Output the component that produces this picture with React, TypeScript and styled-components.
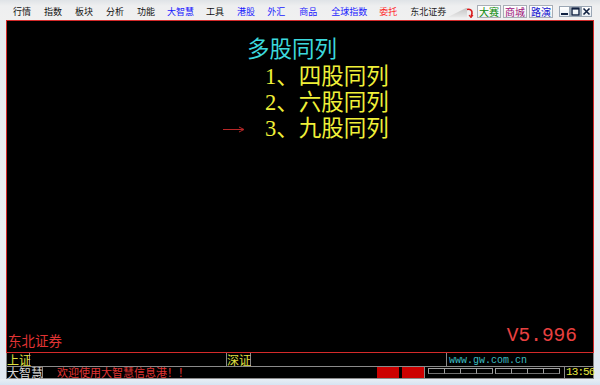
import React from "react";
import styled, { createGlobalStyle } from "styled-components";

const GlobalStyle = createGlobalStyle`
  html, body { margin: 0; padding: 0; background: #ffffff; }
  * { box-sizing: border-box; }
`;

const CJK = `"Noto Sans CJK SC", "Noto Sans", sans-serif`;

const Window = styled.div`
  width: 600px;
  height: 385px;
  display: flex;
  flex-direction: column;
  padding: 0 6px;
  background: linear-gradient(180deg, #e6eaee 0%, #eceff2 60%, #dfe8f2 100%);
  overflow: hidden;
`;

const MenuBar = styled.div`
  height: 20px;
  display: flex;
  align-items: center;
  padding: 3px 8px 0 13px;
  margin: 0 -6px;
  background: linear-gradient(180deg, #dfe3e7 0px, #eeeff0 6px, #f0f0f0 100%);
`;

const MenuItem = styled.span<{ $c?: string; $w?: number }>`
  font-family: ${CJK};
  font-size: 9px;
  line-height: 12px;
  color: ${(p) => p.$c || "#111"};
  margin-right: ${(p) => (p.$w !== undefined ? p.$w : 13)}px;
  white-space: nowrap;
`;

const Spacer = styled.div`
  flex: 1;
`;

const Slope = styled.div`
  width: 20px;
  height: 10px;
  margin-top: 2px;
  background: linear-gradient(180deg, #c4c4c4, #ececec);
  clip-path: polygon(0 100%, 100% 0, 100% 100%);
`;

const HookIcon = styled.svg`
  width: 9px;
  height: 11px;
  margin: 2px 3px 0 -2px;
`;

const ToolButton = styled.div<{ $c: string }>`
  height: 13px;
  padding: 0 1px;
  margin-right: 2px;
  display: flex;
  align-items: center;
  border: 1px solid #a8aeb6;
  background: linear-gradient(180deg, #ffffff, #eef0f2);
  font-family: ${CJK};
  font-size: 10px;
  color: ${(p) => p.$c};
  line-height: 11px;
`;

const Controls = styled.div`
  display: flex;
  margin-left: 4px;
`;

const CtrlBtn = styled.div`
  width: 11px;
  height: 11px;
  border: 1px solid #9aa6b4;
  background: linear-gradient(180deg, #ffffff, #e8edf2);
  display: flex;
  align-items: center;
  justify-content: center;
`;

const Main = styled.div`
  height: 333px;
  background: #000;
  border: 1px solid #d42a2a;
  display: flex;
  flex-direction: column;
`;

const Title = styled.div`
  padding: 13px 0 0 240px;
  font-family: ${CJK};
  font-size: 22.5px;
  line-height: 26px;
  color: #3cd8dc;
  margin-bottom: 4px;
`;

const OptionRow = styled.div`
  display: flex;
  align-items: center;
  height: 26px;
  padding-left: 216px;
`;

const ArrowSlot = styled.div`
  width: 22px;
  height: 8px;
  margin-right: 20px;
  display: flex;
  align-items: center;
`;

const OptionText = styled.span`
  font-family: "Liberation Serif", ${CJK};
  font-size: 22.5px;
  line-height: 26px;
  color: #f0f038;
  white-space: nowrap;
`;

const Num = styled.span`
  font-family: "Liberation Serif", serif;
`;

const Footer = styled.div`
  margin-top: auto;
  display: flex;
  justify-content: space-between;
  align-items: flex-end;
  padding: 0 16px 4px 1px;
`;

const Brand = styled.span`
  font-family: ${CJK};
  font-size: 13.5px;
  line-height: 16px;
  color: #e03434;
`;

const Version = styled.span`
  font-family: "Liberation Mono", monospace;
  font-size: 19.5px;
  line-height: 20px;
  color: #e84040;
  margin-bottom: 2px;
`;

const StatusRow = styled.div<{ $h: number }>`
  height: ${(p) => p.$h}px;
  display: flex;
  background: #000;
  border-bottom: 1px solid #8a8a8a;
  border-left: 1px solid #8a8a8a;
  border-right: 1px solid #8a8a8a;
`;

const Cell = styled.div<{ $w?: number; $c?: string }>`
  ${(p) => (p.$w !== undefined ? `width: ${p.$w}px; flex: none;` : "flex: 1;")}
  height: 100%;
  border-right: 1px solid #8a8a8a;
  font-family: ${CJK};
  font-size: 12px;
  line-height: 12px;
  color: ${(p) => p.$c || "#e0e040"};
  display: flex;
  align-items: center;
  white-space: nowrap;
  &:last-child { border-right: none; }
`;

const UrlText = styled.span`
  font-family: "Liberation Mono", monospace;
  font-size: 10px;
  line-height: 10px;
  color: #3cbcc0;
  padding-left: 2px;
  padding-top: 2px;
`;

const Message = styled.div`
  flex: 1;
  padding-left: 14px;
  font-family: ${CJK};
  font-size: 11px;
  line-height: 11px;
  color: #e03434;
  display: flex;
  align-items: center;
  white-space: nowrap;
`;

const RedBlock = styled.div<{ $ml?: number }>`
  width: 22px;
  flex: none;
  height: 100%;
  background: #cc0000;
  margin-left: ${(p) => p.$ml || 0}px;
`;

const TabArea = styled.div`
  width: 141px;
  flex: none;
  height: 100%;
  display: flex;
  align-items: flex-start;
  padding: 1px 0 0 3px;
  border-left: 1px solid #8a8a8a;
  border-right: 1px solid #8a8a8a;
`;

const TabGroup = styled.div`
  display: flex;
  margin-right: 3px;
`;

const Tab = styled.div`
  width: 17px;
  height: 6px;
  border: 1px solid #a0a0a0;
  border-bottom-color: #707070;
  margin-right: -1px;
`;

const Clock = styled.div`
  width: 28px;
  flex: none;
  font-family: "Liberation Mono", monospace;
  font-size: 11px;
  letter-spacing: -0.9px;
  color: #e8e840;
  display: flex;
  align-items: center;
  padding-left: 1px;
  line-height: 11px;
`;

const BottomFrame = styled.div`
  flex: 1;
  margin: 0 -6px;
  background: linear-gradient(180deg, #e8eef4 0%, #d6e4f2 100%);
`;

const menu: { t: string; c?: string; w?: number }[] = [
  { t: "行情" },
  { t: "指数" },
  { t: "板块" },
  { t: "分析" },
  { t: "功能", w: 12 },
  { t: "大智慧", c: "#1a1aff", w: 12 },
  { t: "工具" },
  { t: "港股", c: "#1a1aff", w: 12 },
  { t: "外汇", c: "#1a1aff", w: 14 },
  { t: "商品", c: "#1a1aff", w: 14 },
  { t: "全球指数", c: "#1a1aff", w: 12 },
  { t: "委托", c: "#ff2a2a", w: 13 },
  { t: "东北证券", c: "#222", w: 0 },
];

const options = [
  { n: "1", t: "四股同列" },
  { n: "2", t: "六股同列" },
  { n: "3", t: "九股同列", arrow: true },
];

export default function App() {
  return (
    <>
      <GlobalStyle />
      <Window>
        <MenuBar>
          {menu.map((m) => (
            <MenuItem key={m.t} $c={m.c} $w={m.w}>
              {m.t}
            </MenuItem>
          ))}
          <Spacer />
          <Slope />
          <HookIcon viewBox="0 0 9 11">
            <path d="M1.5 2.5 C5 1.5 7.5 3 7 6.5 L6 9.5" stroke="#d81818" strokeWidth="1.6" fill="none" />
            <path d="M4 8 L6 10.5 L8 8" stroke="#d81818" strokeWidth="1.2" fill="none" />
          </HookIcon>
          <ToolButton $c="#0a8a0a">大赛</ToolButton>
          <ToolButton $c="#a0107a">商城</ToolButton>
          <ToolButton $c="#1414d0">路演</ToolButton>
          <Controls>
            <CtrlBtn>
              <svg width="9" height="9" viewBox="0 0 9 9">
                <rect x="1" y="6" width="7" height="2" fill="#102040" />
              </svg>
            </CtrlBtn>
            <CtrlBtn>
              <svg width="9" height="9" viewBox="0 0 9 9">
                <rect x="1" y="1" width="7" height="7" fill="none" stroke="#102040" strokeWidth="1.4" />
                <rect x="1" y="1" width="7" height="1.6" fill="#102040" />
              </svg>
            </CtrlBtn>
            <CtrlBtn>
              <svg width="9" height="9" viewBox="0 0 9 9">
                <path d="M1.5 1.5 L7.5 7.5 M7.5 1.5 L1.5 7.5" stroke="#102040" strokeWidth="1.6" />
              </svg>
            </CtrlBtn>
          </Controls>
        </MenuBar>
        <Main>
          <Title>多股同列</Title>
          {options.map((o) => (
            <OptionRow key={o.n}>
              <ArrowSlot>
                {o.arrow && (
                  <svg width="22" height="7" viewBox="0 0 22 7">
                    <path d="M0 3.5 H20" stroke="#b82828" strokeWidth="1" />
                    <path d="M16 1 L21 3.5 L16 6" stroke="#b82828" strokeWidth="1" fill="none" />
                  </svg>
                )}
              </ArrowSlot>
              <OptionText>
                <Num>{o.n}</Num>、{o.t}
              </OptionText>
            </OptionRow>
          ))}
          <Footer>
            <Brand>东北证券</Brand>
            <Version>V5.996</Version>
          </Footer>
        </Main>
        <StatusRow $h={14}>
          <Cell $w={23}>上证</Cell>
          <Cell $w={197} />
          <Cell $w={24}>深证</Cell>
          <Cell $w={196} />
          <Cell>
            <UrlText>www.gw.com.cn</UrlText>
          </Cell>
        </StatusRow>
        <StatusRow $h={12}>
          <Cell $w={36} $c="#d8d8d8">大智慧</Cell>
          <Message>欢迎使用大智慧信息港！！</Message>
          <RedBlock />
          <RedBlock $ml={3} />
          <TabArea>
            <TabGroup>
              <Tab />
              <Tab />
              <Tab />
              <Tab />
            </TabGroup>
            <TabGroup>
              <Tab />
              <Tab />
              <Tab />
              <Tab />
            </TabGroup>
          </TabArea>
          <Clock>13:56</Clock>
        </StatusRow>
        <BottomFrame />
      </Window>
    </>
  );
}
